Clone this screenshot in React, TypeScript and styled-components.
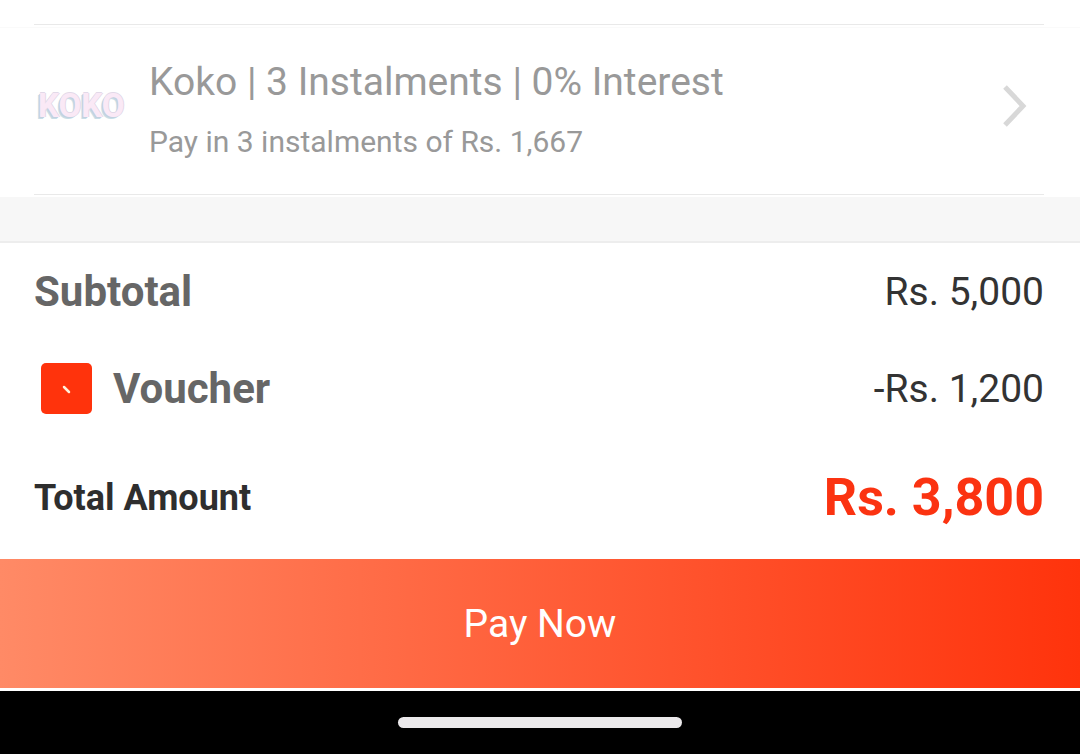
import React from "react";
import styled, { createGlobalStyle } from "styled-components";

const GlobalStyle = createGlobalStyle`
  *, *::before, *::after { box-sizing: border-box; }
  body {
    margin: 0;
    background: #fff;
    font-family: Roboto, "Liberation Sans", sans-serif;
  }
`;

const Screen = styled.main`
  display: flex;
  flex-direction: column;
  min-height: 100vh;
  background: #fff;
`;

const MethodGroup = styled.section`
  padding: 0 36px 2px 34px;
`;

const PreviousGroup = styled(MethodGroup)`
  border-bottom: 1px solid #fafafa;
`;

const PreviousMethod = styled.div`
  height: 25px;
  border-bottom: 1px solid #e9e9e9;
`;

const Method = styled.button`
  display: flex;
  align-items: center;
  width: 100%;
  height: 167px;
  padding: 0 17px 11px 3px;
  border: 0;
  border-bottom: 1px solid #e9e9e9;
  background: none;
  font-family: inherit;
  text-align: left;
  cursor: pointer;
`;

const Logo = styled.span`
  flex: none;
  width: 92px;
  margin-right: 20px;
  padding-left: 1px;
  color: #fae9f6;
  font-size: 33px;
  font-weight: 700;
  line-height: 40px;
  text-shadow:
    1px 0 0 #e2d9e8,
    0 -1px 0 #e2d9e8,
    -1px 1px 0 #c3d0df,
    -2px 2px 0 #c8dee7;
`;

const MethodInfo = styled.span`
  display: flex;
  flex: 1;
  flex-direction: column;
  gap: 18px;
`;

const MethodName = styled.span`
  color: #999;
  font-size: 39px;
  line-height: 54px;
`;

const MethodNote = styled.span`
  color: #999;
  font-size: 30px;
  line-height: 30px;
`;

const Chevron = styled.svg`
  flex: none;
  width: 24px;
  height: 42px;
`;

const Divider = styled.div`
  height: 46px;
  background: #f7f7f7;
  border-bottom: 2px solid #ededed;
`;

const Summary = styled.dl`
  margin: 0;
  padding: 0 36px 0 34px;
`;

const Line = styled.div<{ $tall?: boolean }>`
  display: flex;
  align-items: center;
  justify-content: space-between;
  height: ${(p) => (p.$tall ? 122 : 97)}px;
`;

const Label = styled.dt<{ $strong?: boolean }>`
  display: flex;
  align-items: center;
  color: ${(p) => (p.$strong ? "#2e2e2e" : "#666")};
  font-size: ${(p) => (p.$strong ? 36 : 42)}px;
  font-weight: 700;
  line-height: 48px;
`;

const Amount = styled.dd<{ $strong?: boolean }>`
  margin: 0;
  color: ${(p) => (p.$strong ? "#fb3311" : "#333")};
  font-size: ${(p) => (p.$strong ? 52 : 39)}px;
  font-weight: ${(p) => (p.$strong ? 700 : 400)};
  line-height: 60px;
`;

const VoucherIcon = styled.svg`
  width: 51px;
  height: 51px;
  margin: 0 21px 0 7px;
`;

const PayButton = styled.button`
  width: 100%;
  height: 129px;
  padding: 0;
  border: 0;
  background: linear-gradient(90deg, #ff8a66, #ff330c);
  color: #fff;
  font-family: inherit;
  font-size: 39px;
  cursor: pointer;
`;

const SystemBar = styled.footer`
  display: flex;
  flex: 1;
  justify-content: center;
  min-height: 63px;
  margin-top: 3px;
  padding-top: 26px;
  background: #000;
`;

const HomeHandle = styled.div`
  width: 284px;
  height: 11px;
  border-radius: 6px;
  background: #ebe9eb;
`;

export default function App() {
  return (
    <>
      <GlobalStyle />
      <Screen>
        <PreviousGroup>
          <PreviousMethod />
        </PreviousGroup>
        <MethodGroup>
          <Method type="button">
            <Logo>KOKO</Logo>
            <MethodInfo>
              <MethodName>Koko | 3 Instalments | 0% Interest</MethodName>
              <MethodNote>Pay in 3 instalments of Rs. 1,667</MethodNote>
            </MethodInfo>
            <Chevron viewBox="0 0 24 42" fill="none" aria-hidden="true">
              <path d="M2 2 20 21 2 40" stroke="#d8d8d8" strokeWidth="5" />
            </Chevron>
          </Method>
        </MethodGroup>
        <Divider />
        <Summary>
          <Line>
            <Label>Subtotal</Label>
            <Amount>Rs. 5,000</Amount>
          </Line>
          <Line>
            <Label>
              <VoucherIcon viewBox="0 0 51 51" aria-hidden="true">
                <rect width="51" height="51" rx="5" fill="#ff330c" />
                <path d="m23 24 5 5" stroke="#fff1dc" strokeWidth="2.500" strokeLinecap="round" />
              </VoucherIcon>
              Voucher
            </Label>
            <Amount>-Rs. 1,200</Amount>
          </Line>
          <Line $tall>
            <Label $strong>Total Amount</Label>
            <Amount $strong>Rs. 3,800</Amount>
          </Line>
        </Summary>
        <PayButton type="button">Pay Now</PayButton>
        <SystemBar>
          <HomeHandle />
        </SystemBar>
      </Screen>
    </>
  );
}
